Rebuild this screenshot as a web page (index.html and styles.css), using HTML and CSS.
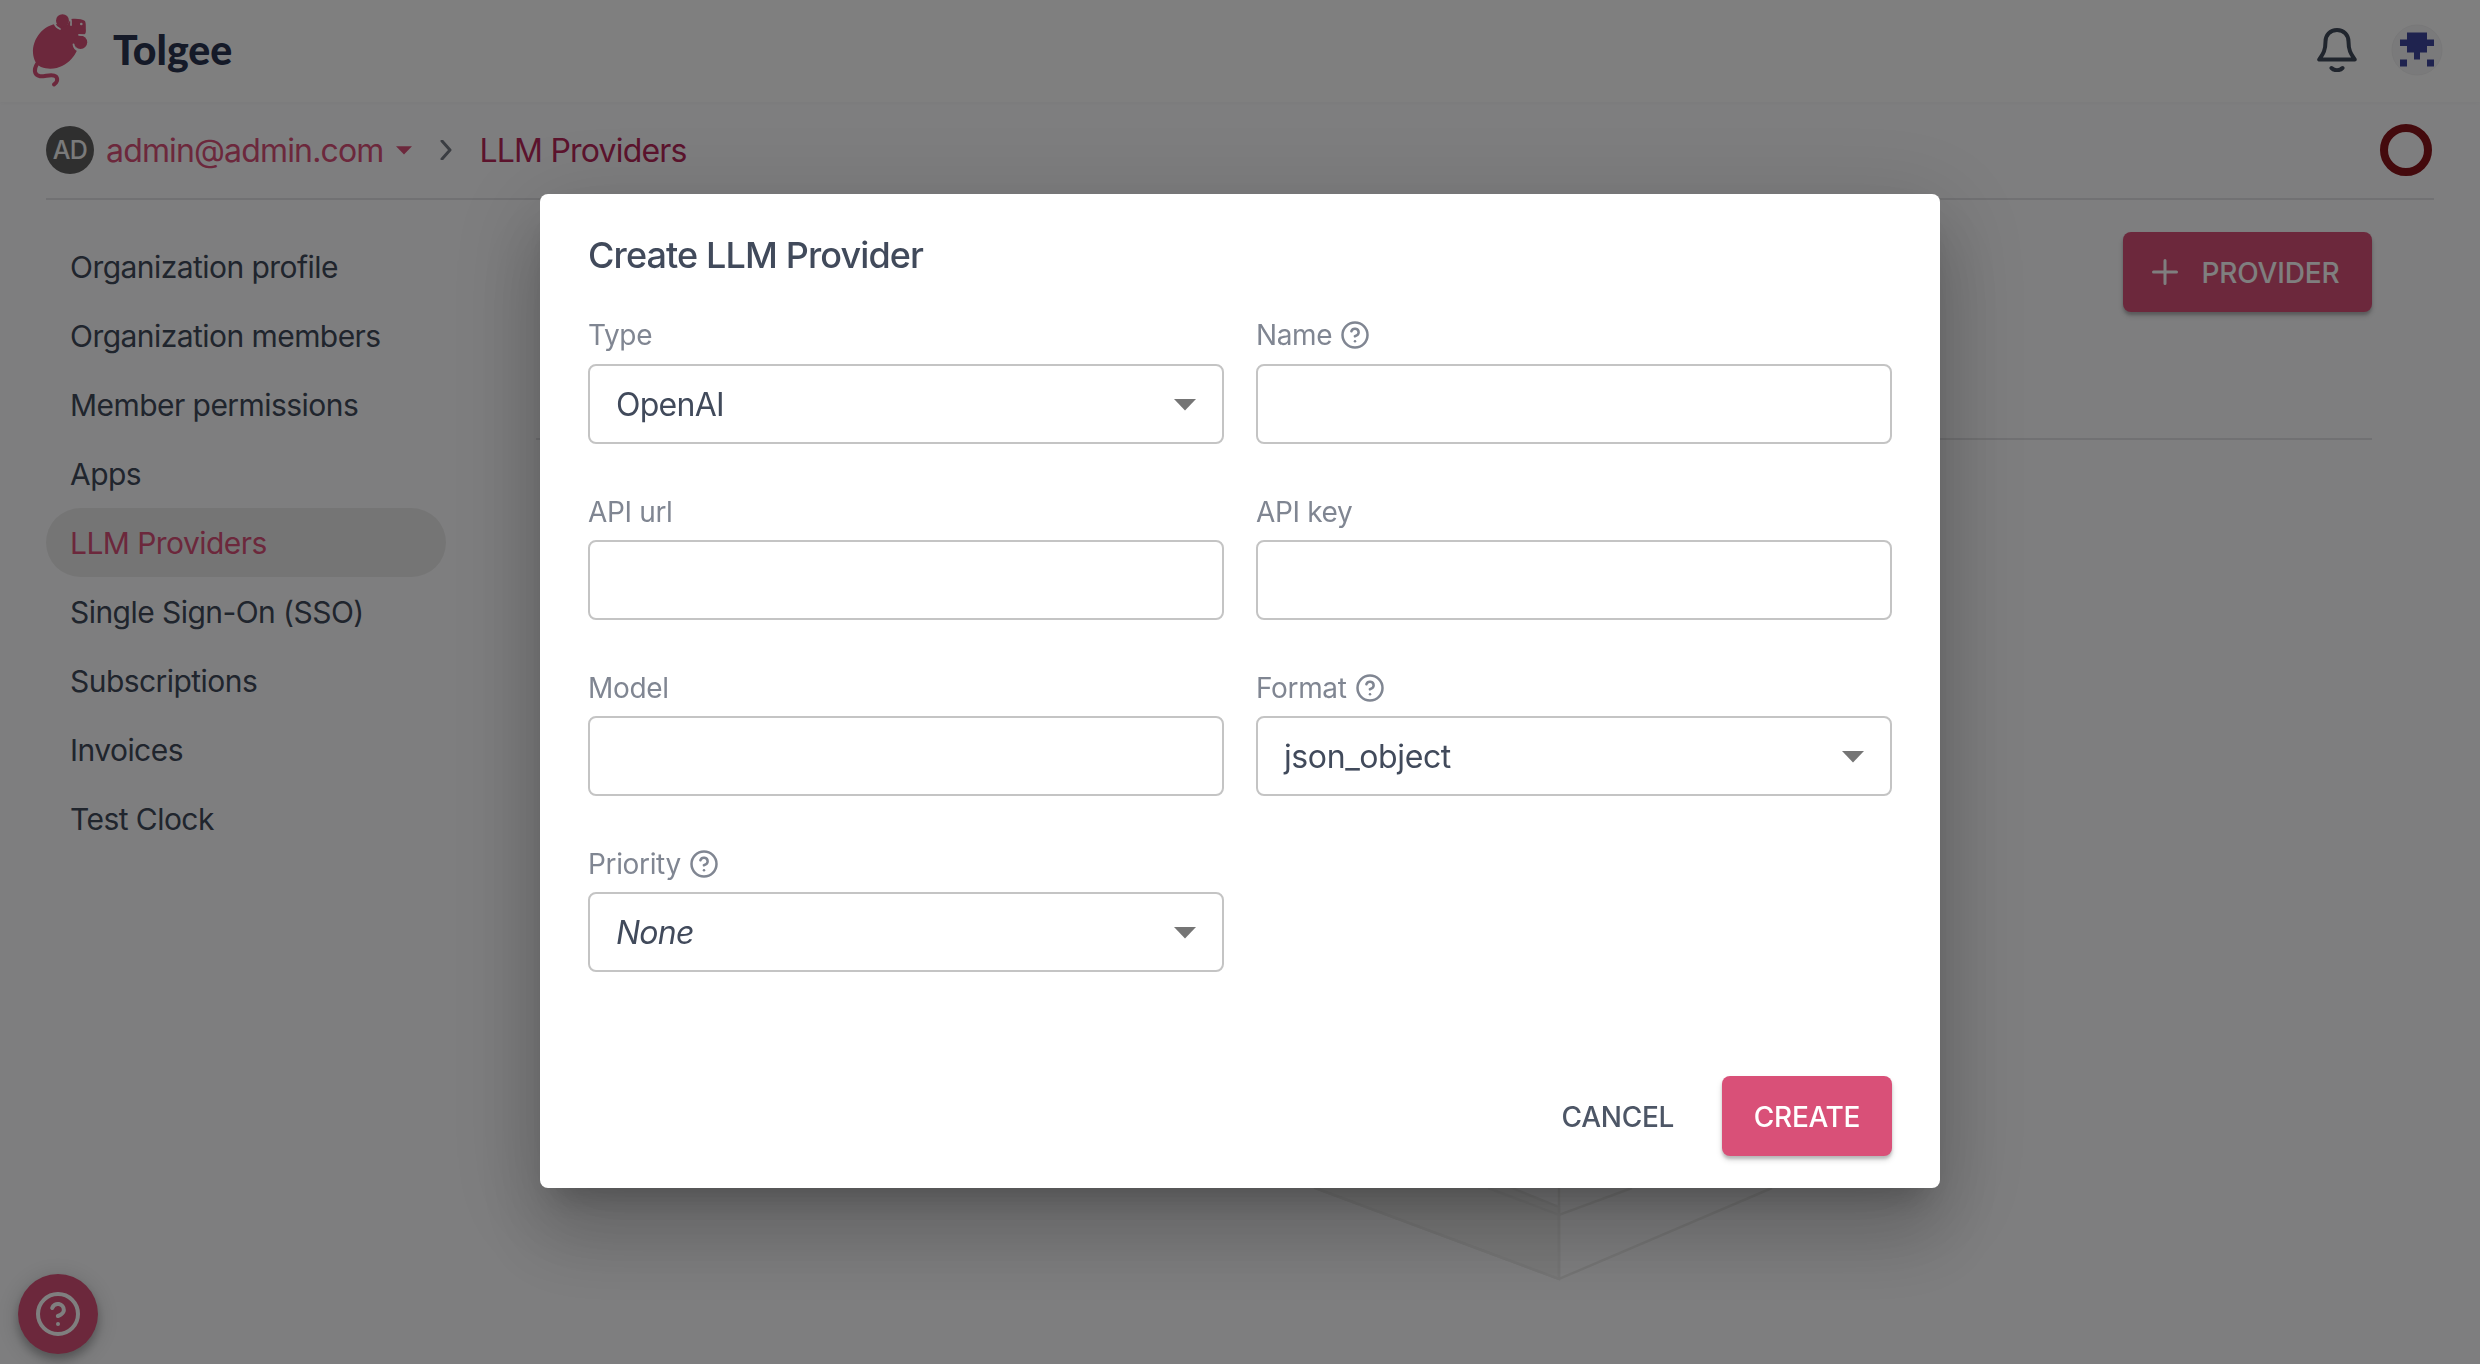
FILE: index.html
```html
<!DOCTYPE html>
<html lang="en">
<head>
<meta charset="utf-8">
<title>Tolgee - LLM Providers</title>
<link rel="stylesheet" href="styles.css">
</head>
<body>
<svg width="0" height="0" class="defs">
  <symbol id="help" viewBox="0 0 24 24"><g fill="none" stroke="currentColor" stroke-width="2" stroke-linecap="round" stroke-linejoin="round"><circle cx="12" cy="12" r="10"/><path d="M9.09 9a3 3 0 0 1 5.83 1c0 2-3 3-3 3"/><path d="M12 17h.01"/></g></symbol>
  <symbol id="caret" viewBox="0 0 22 12"><path d="M0 0h22L11 11.5z" fill="currentColor"/></symbol>
</svg>

<div class="app">
  <header class="topbar">
    <a class="brand">
      <svg class="mouse" viewBox="0 0 54 72">
        <path d="M22 10C17 11 11 14 7 19 2 25-.5 32 0 39c.5 7 3.500 12 8 14 8 3 16 1.500 21-1 8-4 12-9.500 15-15.500L41 29l6-8 4.500-.5c1.500-1 1.500-3 1.300-6 0-3 .2-5-.8-7.500C49 5 44 4.500 38 5l-4 6z"/>
        <circle cx="29.500" cy="6.700" r="6.500"/>
        <circle cx="47.500" cy="28.300" r="6.700"/>
        <path class="tail" d="M4 50c-3 5-3.500 11 3 12.300 5 .7 12-3.300 16 .2 2.500 3 .5 6.500-2 8"/>
        <path class="gap" d="M21.500 9.500q1.500 4 5.500 5.500M37.300 4q1.200 3.500.7 7M40.500 30.500q.7 4.500 5 6M46 20.800q4 .2 8 .9"/>
        <circle class="eye" cx="48.300" cy="10" r="1.300"/>
      </svg>
      <span class="wordmark">Tolgee</span>
    </a>
    <div class="topbar-actions">
      <svg class="bell" viewBox="0 0 40 44"><path d="M20 2c-7 0-11.500 5-11.500 11.500C8.500 24 5 27 2.200 31.500h35.600C35 27 31.500 24 31.500 13.500 31.500 7 27 2 20 2zM14.500 40c3 3 8 3 11 0"/></svg>
      <svg class="user" viewBox="0 0 52 52"><circle cx="26" cy="26" r="25"/><path d="M16 8.500h20v7h7v6.500h-7v6.500h-7v7h-6v-7h-7v-6.500h-7v-6.500h7zM9 35.500h7v7h-7zM36 35.500h7v7h-7z"/></svg>
    </div>
  </header>

  <div class="crumbs">
    <span class="org-avatar">AD</span>
    <span class="crumb-org">admin@admin.com</span>
    <svg class="crumb-caret"><use href="#caret"/></svg>
    <svg class="chevron" viewBox="0 0 12 20"><path d="M2 1l8 9-8 9"/></svg>
    <span class="crumb-page">LLM Providers</span>
    <span class="usage"></span>
  </div>

  <div class="content">
    <nav class="menu">
      <a>Organization profile</a>
      <a>Organization members</a>
      <a>Member permissions</a>
      <a>Apps</a>
      <a class="active">LLM Providers</a>
      <a>Single Sign-On (SSO)</a>
      <a>Subscriptions</a>
      <a>Invoices</a>
      <a>Test Clock</a>
    </nav>
    <main class="main">
      <div class="main-head">
        <button class="btn primary provider"><svg viewBox="0 0 26 26"><path d="M13 1.500v23M1.500 13h23"/></svg>Provider</button>
      </div>
      <svg class="empty-box" viewBox="0 0 480 200">
        <path class="face" d="M0 12L240 109V181L-4 90z"/>
        <path d="M240 0V181M169 90L240 117L313 90M-4 90L240 181L453 90"/>
      </svg>
    </main>
  </div>
</div>

<div class="fab"><svg><use href="#help"/></svg></div>

<div class="scrim">
  <form class="dialog">
    <h2>Create LLM Provider</h2>
    <div class="fields">
      <div class="field"><label>Type</label><div class="input">OpenAI<svg><use href="#caret"/></svg></div></div>
      <div class="field"><label>Name<svg><use href="#help"/></svg></label><div class="input"></div></div>
      <div class="field"><label>API url</label><div class="input"></div></div>
      <div class="field"><label>API key</label><div class="input"></div></div>
      <div class="field"><label>Model</label><div class="input"></div></div>
      <div class="field"><label>Format<svg><use href="#help"/></svg></label><div class="input format">json_object<svg><use href="#caret"/></svg></div></div>
      <div class="field"><label>Priority<svg><use href="#help"/></svg></label><div class="input"><em>None</em><svg><use href="#caret"/></svg></div></div>
    </div>
    <div class="actions">
      <button class="btn text">Cancel</button>
      <button class="btn primary create">Create</button>
    </div>
  </form>
</div>
</body>
</html>
```
FILE: styles.css
```css
* { box-sizing: border-box; }
body {
  margin: 0;
  height: 1364px;
  overflow: hidden;
  background: #fdfdff;
  color: #414a5b;
  font-family: Inter, "Liberation Sans", sans-serif;
  font-size: 32px;
}
.defs { position: absolute; }
.topbar {
  height: 102px;
  padding: 0 37px 0 33px;
  display: flex;
  align-items: center;
  justify-content: space-between;
  background: #fff;
  box-shadow: 0 1px 5px rgba(0, 0, 0, .04);
}
.brand { display: flex; align-items: center; gap: 26px; padding-bottom: 2px; }
.mouse { width: 54px; height: 72px; fill: #d95078; overflow: visible; }
.mouse .tail { fill: none; stroke: #d95078; stroke-width: 4; stroke-linecap: round; }
.mouse .gap { fill: none; stroke: #fff; stroke-width: 1.800; stroke-linecap: round; }
.mouse .eye { fill: #fff; }
.wordmark { font: 900 41px/48px Lato, sans-serif; color: #2b3450; }
.topbar-actions { display: flex; align-items: center; gap: 34px; padding-bottom: 2px; }
.bell { width: 40px; height: 44px; fill: none; stroke: #414a5b; stroke-width: 4; stroke-linecap: round; stroke-linejoin: round; }
.user { width: 52px; height: 52px; fill: #3e469f; }
.user circle { fill: #f5f5f6; stroke: #f0f0f2; stroke-width: 1; }

.crumbs {
  height: 98px;
  margin: 0 46px;
  display: flex;
  align-items: center;
  border-bottom: 2px solid #e3e3e6;
  color: #d95078;
}
.org-avatar {
  width: 48px;
  height: 48px;
  margin-right: 12px;
  border-radius: 50%;
  background: #5f5f5f;
  color: #f4f4f4;
  font-size: 25px;
  font-weight: 500;
  letter-spacing: -.6px;
  line-height: 48px;
  text-align: center;
}
.crumb-org { letter-spacing: -.84px; }
.crumb-caret { width: 16px; height: 9px; margin: 0 28px 0 12px; }
.chevron { width: 12px; height: 20px; margin-right: 28px; fill: none; stroke: #777c86; stroke-width: 3; stroke-linecap: round; stroke-linejoin: round; }
.crumb-page { color: #b8285a; letter-spacing: -.8px; }
.usage { width: 52px; height: 52px; margin: 0 2px 0 auto; border: 8px solid #88141a; border-radius: 50%; }

.content { display: flex; padding: 32px 108px 0 46px; }
.menu { width: 400px; }
.menu a { display: block; height: 69px; padding: 0 24px; font-size: 30px; line-height: 71px; letter-spacing: -.55px; }
.menu .active { border-radius: 35px; background: #ebebeb; color: #d95078; }
.main { flex: 1; margin-left: 90px; }
.main-head { height: 208px; border-bottom: 2px solid #e3e3e6; text-align: right; }
.empty-box { display: block; width: 480px; height: 200px; margin: 658px 0 0 783px; fill: none; stroke: #ebebeb; stroke-width: 2.500; overflow: visible; }
.empty-box .face { fill: #f3f3f3; }

.btn {
  display: inline-flex;
  align-items: center;
  justify-content: center;
  height: 80px;
  padding: 2px 0 0;
  border: 0;
  border-radius: 8px;
  background: none;
  color: #4d5666;
  font: 500 28px Inter, sans-serif;
  letter-spacing: -.3px;
  text-transform: uppercase;
}
.primary { background: #d95078; color: #fff; box-shadow: 0 3px 3px rgba(0, 0, 0, .18), 0 4px 6px rgba(0, 0, 0, .14); }
.provider { width: 249px; gap: 23px; padding-right: 3px; letter-spacing: -.15px; }
.provider svg { width: 26px; height: 26px; margin-top: -2px; fill: none; stroke: currentColor; stroke-width: 3; stroke-linecap: round; }
.create { width: 170px; }
.fab {
  position: fixed;
  left: 18px;
  bottom: 10px;
  width: 80px;
  height: 80px;
  display: flex;
  align-items: center;
  justify-content: center;
  border-radius: 50%;
  background: #d95078;
  color: #fff;
  box-shadow: 0 6px 10px rgba(0, 0, 0, .25), 0 4px 26px rgba(0, 0, 0, .18);
}
.fab svg { width: 48px; height: 48px; }

.scrim { position: fixed; inset: 0; background: rgba(0, 0, 0, .5); display: flex; justify-content: center; align-items: flex-start; padding-top: 194px; }
.dialog {
  width: 1400px;
  height: 994px;
  padding: 0 48px 32px;
  display: flex;
  flex-direction: column;
  border-radius: 8px;
  background: #fff;
  box-shadow: 0 22px 30px -14px rgba(0, 0, 0, .2), 0 48px 76px 6px rgba(0, 0, 0, .14), 0 18px 92px 16px rgba(0, 0, 0, .12);
}
h2 { margin: 32px 0 10px; font-size: 36px; line-height: 58px; font-weight: 500; letter-spacing: -.88px; }
.fields { display: grid; grid-template-columns: 1fr 1fr; gap: 48px 32px; padding-top: 22px; }
.field label { display: flex; align-items: center; height: 48px; padding-bottom: 8px; gap: 8px; color: #808692; font-size: 28px; letter-spacing: -.35px; }
.field:nth-child(-n+2) label { padding-bottom: 10px; }
.field label svg { width: 30px; height: 30px; }
.input { height: 80px; padding: 0 26px; display: flex; align-items: center; justify-content: space-between; border: 2px solid #c4c4c4; border-radius: 8px; letter-spacing: -.75px; }
.format { letter-spacing: -.4px; }
.input svg { width: 22px; height: 12px; margin-top: 2px; color: #757575; }
.actions { margin-top: auto; display: flex; justify-content: flex-end; gap: 48px; }
```
